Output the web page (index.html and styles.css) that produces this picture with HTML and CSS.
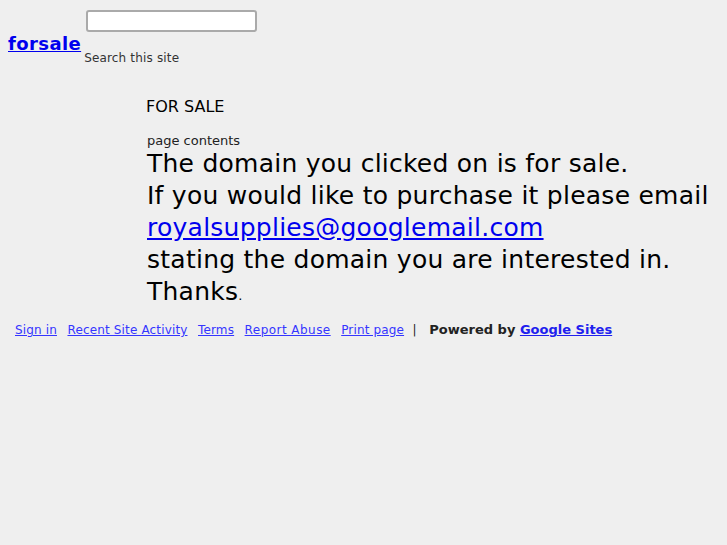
FILE: index.html
```html
<!DOCTYPE html>
<html>
<head>
<meta charset="utf-8">
<title>forsale</title>
<link rel="stylesheet" href="styles.css">
</head>
<body>
<div class="header">
  <a class="site-title" href="#">forsale</a>
  <div class="search">
    <input class="search-box" type="text">
    <div class="search-label">Search this site</div>
  </div>
</div>
<div class="content">
  <h3 class="page-title">FOR SALE</h3>
  <div class="page-label">page contents</div>
  <div class="message">
    <div>The domain you clicked on is for sale.</div>
    <div>If you would like to purchase it please email</div>
    <div><a href="#">royalsupplies@googlemail.com</a>&nbsp;</div>
    <div>stating the domain you are interested in.</div>
    <div>Thanks<span class="small">.</span></div>
  </div>
</div>
<div class="footer">
  <a href="#">Sign in</a>
  <a href="#">Recent Site Activity</a>
  <a href="#">Terms</a>
  <a href="#" class="wide">Report Abuse</a>
  <a href="#">Print page</a>
  <span class="sep">|</span>
  <span class="powered">Powered by <a href="#">Google Sites</a></span>
</div>
</body>
</html>
```
FILE: styles.css
```css
html, body {
  margin: 0;
  padding: 0;
  background: #efefef;
  font-family: "DejaVu Sans", Verdana, sans-serif;
  color: #000;
}

.header {
  display: flex;
  align-items: flex-start;
  padding: 10px 0 0 8px;
}

.site-title {
  margin-top: 23px;
  font-size: 18px;
  letter-spacing: 0.4px;
  font-weight: bold;
  line-height: 22px;
  color: #0000ee;
}

.search {
  display: flex;
  flex-direction: column;
  margin-left: 3px;
}

.search-box {
  box-sizing: border-box;
  width: 171px;
  height: 22px;
  margin: 0 0 0 2px;
  border: 2px solid #aaa;
  border-radius: 3px;
  background: #fff;
  padding: 0;
}

.search-label {
  margin-top: 18px;
  font-size: 12px;
  letter-spacing: 0.17px;
  line-height: 16px;
  color: #333;
}

.content {
  padding-left: 146px;
  margin-top: 31px;
}

.page-title {
  margin: 0;
  font-size: 16px;
  font-weight: normal;
  line-height: 19px;
}

.page-label {
  margin-top: 17px;
  margin-left: 1px;
  font-size: 13px;
  line-height: 16px;
  color: #222;
}

.message {
  margin-left: 1px;
  margin-top: -1px;
  font-size: 25px;
  letter-spacing: 0.25px;
  line-height: 32px;
}

.message a {
  color: #0000ee;
}

.small {
  font-size: 13px;
  letter-spacing: 0;
}

.footer {
  display: flex;
  align-items: baseline;
  gap: 10.5px;
  padding: 10px 0 0 15px;
  font-size: 12px;
  letter-spacing: 0.15px;
  line-height: 16px;
}

.footer a {
  color: #3535ff;
}

.footer .wide {
  letter-spacing: 0.45px;
}

.sep {
  color: #222;
  margin-left: -2px;
  margin-right: 2px;
}

.powered {
  font-size: 13px;
  letter-spacing: 0;
  font-weight: bold;
  color: #222;
}

.powered a {
  color: #2020ee;
}
```
